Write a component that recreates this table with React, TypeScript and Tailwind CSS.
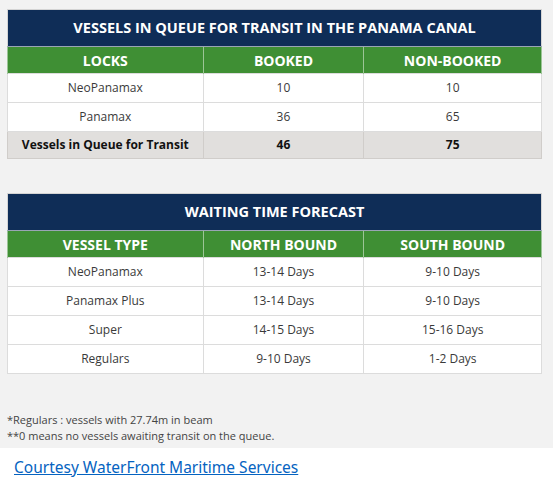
const font = { fontFamily: '"Open Sans", "Liberation Sans", sans-serif' };

const queueRows = [
  ["NeoPanamax", "10", "10"],
  ["Panamax", "36", "65"],
];

const forecastRows = [
  ["NeoPanamax", "13-14 Days", "9-10 Days"],
  ["Panamax Plus", "13-14 Days", "9-10 Days"],
  ["Super", "14-15 Days", "15-16 Days"],
  ["Regulars", "9-10 Days", "1-2 Days"],
];

function Table({ title, head, rows, total }: { title: string; head: string[]; rows: string[][]; total?: string[] }) {
  return (
    <table className="w-[535px] border-collapse border border-[#d4d4d4] text-center" style={font}>
      <colgroup>
        <col className="w-[196px]" />
        <col className="w-[161px]" />
        <col className="w-[178px]" />
      </colgroup>
      <thead>
        <tr>
          <th colSpan={3} className="h-[37px] bg-[#0f2d57] text-white text-[14.5px] font-bold border-b border-[#9aa5b5]">
            {title}
          </th>
        </tr>
        <tr className="bg-[#3f8f34] text-white text-[14px] font-bold">
          {head.map((h) => (
            <th key={h} className="h-[27px] border-x border-[#9cc596]">{h}</th>
          ))}
        </tr>
      </thead>
      <tbody>
        {rows.map((r) => (
          <tr key={r[0]} className="bg-white text-[12px] text-[#3a3a3a]">
            {r.map((c, i) => (
              <td key={i} className="h-[29px] border border-[#dcdcdc]">{c}</td>
            ))}
          </tr>
        ))}
        {total && (
          <tr className="bg-[#e1dfdd] text-[12px] font-bold text-[#111]">
            {total.map((c, i) => (
              <td key={i} className="h-[27px] border border-[#d0cdca]">{c}</td>
            ))}
          </tr>
        )}
      </tbody>
    </table>
  );
}

export default function App() {
  return (
    <div className="w-[553px] h-[490px] bg-white">
      <div className="bg-[#f2f2f2] h-[448px] pl-[7px] pt-[9px]">
        <Table
          title="VESSELS IN QUEUE FOR TRANSIT IN THE PANAMA CANAL"
          head={["LOCKS", "BOOKED", "NON-BOOKED"]}
          rows={queueRows}
          total={["Vessels in Queue for Transit", "46", "75"]}
        />
        <div className="h-[34px]" />
        <Table
          title="WAITING TIME FORECAST"
          head={["VESSEL TYPE", "NORTH BOUND", "SOUTH BOUND"]}
          rows={forecastRows}
        />
        <div className="mt-[38px] text-[11px] leading-[16px] text-[#444]" style={font}>
          <p>*Regulars : vessels with 27.74m in beam</p>
          <p>**0 means no vessels awaiting transit on the queue.</p>
        </div>
      </div>
      <div className="pl-[14px] pt-[7px]">
        <a href="#" className="text-[#0563c1] underline text-[15.5px]" style={{ fontFamily: '"Noto Sans", sans-serif' }}>
          Courtesy WaterFront Maritime Services
        </a>
      </div>
    </div>
  );
}
